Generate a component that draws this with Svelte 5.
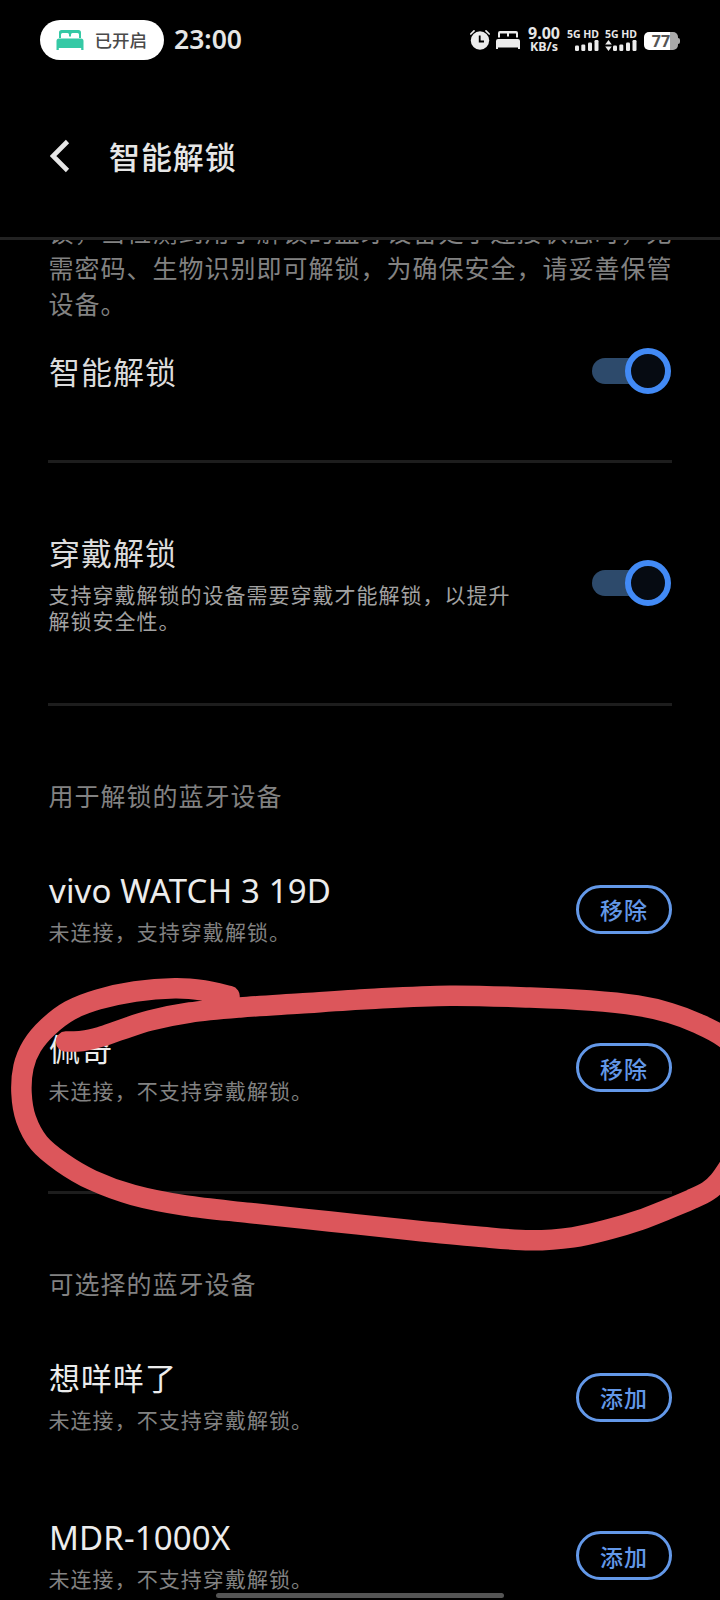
<script>
	let smartUnlock = true;
	let wearUnlock = true;

	const sections = [
		{
			title: "用于解锁的蓝牙设备",
			action: "移除",
			devices: [
				{ name: "vivo WATCH 3 19D", status: "未连接，支持穿戴解锁。", latin: true },
				{ name: "佩奇", status: "未连接，不支持穿戴解锁。" }
			]
		},
		{
			title: "可选择的蓝牙设备",
			action: "添加",
			devices: [
				{ name: "想咩咩了", status: "未连接，不支持穿戴解锁。" },
				{ name: "MDR-1000X", status: "未连接，不支持穿戴解锁。", latin: true }
			]
		}
	];

	// centre line of the pen stroke
	const pen = [
		[66, 1041.5], [82, 1041], [100, 1037], [122, 1029.5], [150, 1020.5], [190, 1012.5],
		[240, 1007.5], [300, 1003.5], [370, 999], [450, 995.7], [530, 997.5], [590, 1000.5],
		[637, 1005.5], [670, 1013], [698, 1023.5], [724, 1037.5], [750, 1062], [760, 1095],
		[750, 1132], [730, 1165], [719, 1181], [708, 1191],
		[691, 1199.5], [667, 1209.5], [640, 1220], [610, 1229], [573, 1237.3], [530, 1240.3],
		[477, 1236.5], [410, 1230], [330, 1221.5], [250, 1213], [185, 1205.5],
		[133, 1195], [92, 1180], [62, 1162.5], [39, 1143], [26, 1119], [21.5, 1093],
		[23.5, 1067], [32, 1046], [48, 1027], [70, 1010.500], [98, 999.5], [135, 991.5],
		[175, 988.3], [204, 990.500], [229.5, 996]
	];

	function smooth(points) {
		let d = `M${points[0]}`;
		for (let i = 0; i < points.length - 1; i++) {
			const a = points[i - 1] || points[i];
			const b = points[i];
			const c = points[i + 1];
			const e = points[i + 2] || c;
			d += `C${b[0] + (c[0] - a[0]) / 6} ${b[1] + (c[1] - a[1]) / 6}`;
			d += ` ${c[0] - (e[0] - b[0]) / 6} ${c[1] - (e[1] - b[1]) / 6} ${c[0]} ${c[1]}`;
		}
		return d;
	}
</script>

<div class="screen">
	<div class="status">
		<div class="pill">
			<svg width="28" height="20" viewBox="0 0 28 20" fill="#35c9a5">
				<path d="M3 8V2.5Q3 0 5.500 0H22.500Q25 0 25 2.500V8H23V4.500Q23 3 21.500 3H16.500Q15 3 15 4.500V6.500H13V4.500Q13 3 11.500 3H6.500Q5 3 5 4.500V8Z" />
				<path d="M3 8.500H25Q27.500 8.500 27.500 11V20H25.200V18H2.800V20H.5V11Q.5 8.500 3 8.500Z" />
			</svg>
			<span>已开启</span>
		</div>
		<span class="time">23:00</span>
		<div class="tray">
			<svg width="20" height="20" viewBox="0 0 20 20">
				<circle cx="10" cy="10.500" r="9.200" fill="#ececec" />
				<path d="M.8 4L4 .9M19.200 4L16 .9" stroke="#ececec" stroke-width="1.700" stroke-linecap="round" />
				<path d="M9.700 5.500V11.500H14" fill="none" stroke="#000" stroke-width="1.800" />
			</svg>
			<svg class="bed" width="24" height="18" viewBox="0 0 24 18" fill="#ececec">
				<path d="M2 6.500V2Q2 0 4 0H20Q22 0 22 2V6.500H20V2.500H13V5.500H11V2.500H4V6.500Z" />
				<path d="M2 8H22Q24 8 24 10V18H22V16.500H2V18H0V10Q0 8 2 8Z" />
			</svg>
			<div class="speed"><b>9.00</b><span>KB/s</span></div>
			{#each [false, true] as active}
				<div class="sim">
					<span>5G HD</span>
					<svg width="32" height="11" viewBox="0 0 32 11" fill="#ececec">
						{#if active}
							<path d="M3.500 0L6.800 4.500H.2ZM3.500 11L.2 6.500H6.800Z" />
						{/if}
						<rect x="8" y="5.500" width="4" height="5.500" rx="1.200" />
						<rect x="14.300" y="4.500" width="4" height="6.500" rx="1.200" />
						<rect x="21" y="2.500" width="4" height="8.500" rx="1.200" />
						<rect x="27.500" y="0" width="4" height="11" rx="1.200" />
					</svg>
				</div>
			{/each}
			<div class="battery"><span>77</span></div>
		</div>
	</div>

	<header>
		<svg width="20" height="34" viewBox="0 0 20 34">
			<path d="M17.500 2.500L3 17L17.500 31.500" fill="none" stroke="#e6e6e6" stroke-width="4.600" />
		</svg>
		<h1>智能解锁</h1>
	</header>

	<main>
		<p class="intro">锁，当检测到用于解锁的蓝牙设备处于连接状态时，无<br />需密码、生物识别即可解锁，为确保安全，请妥善保管<br />设备。</p>

		<div class="setting first">
			<div class="name dim">智能解锁</div>
			<button
				class="toggle"
				class:on={smartUnlock}
				role="switch"
				aria-checked={smartUnlock}
				aria-label="智能解锁"
				on:click={() => smartUnlock = !smartUnlock}
			></button>
		</div>

		<div class="setting second">
			<div>
				<div class="name dim">穿戴解锁</div>
				<p class="hint">支持穿戴解锁的设备需要穿戴才能解锁，以提升<br />解锁安全性。</p>
			</div>
			<button
				class="toggle"
				class:on={wearUnlock}
				role="switch"
				aria-checked={wearUnlock}
				aria-label="穿戴解锁"
				on:click={() => wearUnlock = !wearUnlock}
			></button>
		</div>

		{#each sections as section}
			<section>
				<h2>{section.title}</h2>
				{#each section.devices as device}
					<div class="device">
						<div>
							<div class="name" class:latin={device.latin}>{device.name}</div>
							<div class="state">{device.status}</div>
						</div>
						<button class="action">{section.action}</button>
					</div>
				{/each}
			</section>
		{/each}
	</main>

	<svg class="pen" width="720" height="1600" viewBox="0 0 720 1600">
		<path d={smooth(pen)} />
	</svg>
	<div class="homebar"></div>
</div>

<style>
	:global(body) {
	  background: #000;
	}

	.screen {
	  position: relative;
	  display: flex;
	  flex-direction: column;
	  width: 720px;
	  height: 1600px;
	  overflow: hidden;
	  color: #e6e6e6;
	  font-family: "Noto Sans CJK SC", sans-serif;
	  background: #000;
	}

	svg {
	  display: block;
	  flex: none;
	}

	button {
	  flex: none;
	  box-sizing: border-box;
	  padding: 0;
	  font-family: inherit;
	}

	h1, h2, p {
	  margin: 0;
	}

	.status {
	  display: flex;
	  align-items: center;
	  box-sizing: border-box;
	  flex: none;
	  height: 80px;
	  padding: 0 42px 0 40px;
	}

	.pill {
	  display: flex;
	  align-items: center;
	  gap: 10.5px;
	  box-sizing: border-box;
	  width: 124px;
	  height: 40px;
	  border-radius: 20px;
	  padding-left: 16px;
	  color: #4a4a4a;
	  font-size: 17.5px;
	  font-weight: 500;
	  line-height: 38px;
	  white-space: nowrap;
	  background: #fff;
	}

	.time {
	  margin-left: 10px;
	  padding-bottom: 2px;
	  font: 600 26.5px/36px "Noto Sans", sans-serif;
	}

	.tray {
	  display: flex;
	  align-items: center;
	  margin-left: auto;
	  font-family: "Noto Sans", sans-serif;
	}

	.bed {
	  margin-left: 6px;
	}

	.speed {
	  display: flex;
	  flex-direction: column;
	  align-items: center;
	  width: 34px;
	  margin-left: 7px;
	  font-size: 12.5px;
	  font-weight: 700;
	  line-height: 13px;
	}

	.speed b {
	  font-size: 16px;
	  font-weight: 700;
	  line-height: 13px;
	}

	.sim {
	  width: 32px;
	  margin-left: 6px;
	  padding-bottom: 2px;
	  font-size: 10.5px;
	  font-weight: 700;
	  line-height: 12px;
	  white-space: nowrap;
	}

	.battery {
	  position: relative;
	  width: 34px;
	  height: 18px;
	  margin-left: 7px;
	  margin-top: 2px;
	  border-radius: 5px;
	  color: #555;
	  font-size: 16px;
	  font-weight: 700;
	  line-height: 18px;
	  text-align: center;
	  background: linear-gradient(90deg, #fff 26px, #aaa 26px);
	}

	.battery::after {
	  content: "";
	  position: absolute;
	  top: 6px;
	  right: -2px;
	  width: 2px;
	  height: 6px;
	  border-radius: 0 2px 2px 0;
	  background: #aaa;
	}

	header {
	  display: flex;
	  align-items: center;
	  flex: none;
	  gap: 39px;
	  height: 152px;
	  padding: 0 50px 5px;
	  border-bottom: 3px solid #222;
	}

	h1 {
	  font-size: 31px;
	  font-weight: 500;
	  line-height: 44px;
	  letter-spacing: 0.9px;
	}

	main {
	  flex: 1;
	  min-height: 0;
	  overflow: hidden;
	  padding: 0 48px;
	}

	.intro {
	  margin-top: -27px;
	  padding-left: 0.5px;
	  color: #828282;
	  font-size: 25px;
	  line-height: 36px;
	  letter-spacing: 1px;
	  white-space: nowrap;
	}

	.setting {
	  display: flex;
	  align-items: center;
	  justify-content: space-between;
	  box-sizing: border-box;
	  border-bottom: 3px solid #1d1d1d;
	}

	.first {
	  height: 142px;
	  padding-bottom: 40px;
	}

	.second {
	  height: 243px;
	}

	.name {
	  padding-left: 1px;
	  color: #ececec;
	  font-size: 31px;
	  line-height: 44px;
	  letter-spacing: 1px;
	  white-space: nowrap;
	}

	.name.dim {
	  color: #dcdcdc;
	}

	.device .name {
	  padding-top: 1px;
	  line-height: 43px;
	}

	.device .name.latin {
	  padding-top: 5px;
	  font-family: "Noto Sans", sans-serif;
	  font-size: 33px;
	  line-height: 39px;
	  letter-spacing: 0.15px;
	}

	.hint {
	  margin-top: 7px;
	  padding: 0 0 3px 0.5px;
	  color: #a2a2a2;
	  font-size: 21px;
	  line-height: 26px;
	  letter-spacing: 1px;
	}

	.toggle {
	  position: relative;
	  width: 80px;
	  height: 46px;
	  border: 0;
	  background: none;
	}

	.toggle::before {
	  content: "";
	  position: absolute;
	  top: 10px;
	  left: 0;
	  width: 70px;
	  height: 26px;
	  border-radius: 13px;
	  background: #2d4a6b;
	}

	.toggle::after {
	  content: "";
	  position: absolute;
	  top: 0;
	  left: 0;
	  box-sizing: border-box;
	  width: 46px;
	  height: 46px;
	  border: 6px solid #428af5;
	  border-radius: 50%;
	  background: #060b12;
	}

	.toggle.on::after {
	  left: 33px;
	}

	section {
	  border-bottom: 3px solid #1d1d1d;
	  padding-bottom: 44px;
	}

	h2 {
	  padding: 71px 0 17px 0.5px;
	  color: #828282;
	  font-size: 25px;
	  font-weight: 400;
	  line-height: 36px;
	  letter-spacing: 1px;
	}

	.device {
	  display: flex;
	  align-items: center;
	  justify-content: space-between;
	  height: 158.5px;
	}

	.state {
	  padding-left: 0.5px;
	  color: #828282;
	  font-size: 21px;
	  line-height: 42px;
	  letter-spacing: 1.05px;
	}

	.action {
	  width: 96px;
	  height: 49px;
	  border: 3px solid #6398e8;
	  border-radius: 25px;
	  color: #6398e8;
	  font-size: 23px;
	  font-weight: 500;
	  line-height: 40px;
	  letter-spacing: 1px;
	  background: none;
	}

	.pen {
	  position: absolute;
	  top: 0;
	  left: 0;
	  pointer-events: none;
	}

	.pen path {
	  fill: none;
	  stroke: #dc565b;
	  stroke-width: 20.5;
	  stroke-linecap: round;
	  stroke-linejoin: round;
	}

	.homebar {
	  position: absolute;
	  bottom: 2px;
	  left: 216px;
	  width: 288px;
	  height: 5px;
	  border-radius: 3px;
	  background: #555;
	}
</style>
